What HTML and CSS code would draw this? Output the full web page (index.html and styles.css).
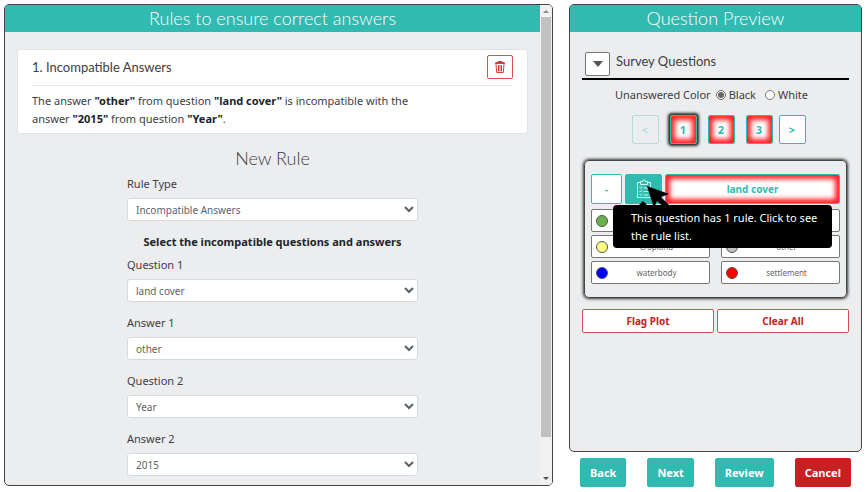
FILE: index.html
```html
<!DOCTYPE html>
<html lang="en">
<head>
<meta charset="utf-8">
<meta name="viewport" content="width=device-width, initial-scale=1">
<title>Survey Rules</title>
<link rel="stylesheet" href="styles.css">
</head>
<body>
<div class="page">
  <main class="panel rules">
    <div class="rules-content">
      <h1 class="panel-title">Rules to ensure correct answers</h1>
      <article class="rule-card">
        <div class="rule-head">
          <h2>1. Incompatible Answers</h2>
          <button class="delete" type="button" aria-label="Delete rule">
            <svg viewBox="0 0 12 14" width="12" height="14" fill="none" stroke="currentColor">
              <path d="M1 3.500h10M1.500 2.500h9M4 2.500V1.500h4v1M2 4l.7 8.500h6.600L10 4M4.500 5v6.500M6 5v6.500M7.500 5v6.500"/>
            </svg>
          </button>
        </div>
        <p>The answer <b>"other"</b> from question <b>"land cover"</b> is incompatible with the answer <b>"2015"</b> from question <b>"Year"</b>.</p>
      </article>
      <form class="rule-form">
        <h2>New Rule</h2>
        <div class="field"><label for="type">Rule Type</label><select id="type"><option>Incompatible Answers</option></select></div>
        <p>Select the incompatible questions and answers</p>
        <div class="field"><label for="q1">Question 1</label><select id="q1"><option>land cover</option></select></div>
        <div class="field"><label for="a1">Answer 1</label><select id="a1"><option>other</option></select></div>
        <div class="field"><label for="q2">Question 2</label><select id="q2"><option>Year</option></select></div>
        <div class="field"><label for="a2">Answer 2</label><select id="a2"><option>2015</option></select></div>
      </form>
    </div>
    <div class="scrollbar" aria-hidden="true">
      <svg viewBox="0 0 10 12" width="10" height="12"><path d="M2 8l3-3 3 3z" fill="#8a8a8a"/></svg>
      <div class="track"><div class="thumb"></div></div>
      <svg viewBox="0 0 10 12" width="10" height="12"><path d="M2 4l3 3 3-3z" fill="#505050"/></svg>
    </div>
  </main>

  <aside class="side">
    <section class="panel preview">
      <h1 class="panel-title">Question Preview</h1>
      <div class="preview-body">
        <div class="survey-head">
          <button class="toggle" type="button" aria-label="Collapse survey questions"><svg viewBox="0 0 12 6" width="12" height="6"><path d="M1 0h10L6 6z" fill="#555"/></svg></button>
          <h2>Survey Questions</h2>
        </div>
        <div class="colors">
          <span>Unanswered Color</span>
          <label><input type="radio" name="color" checked>Black</label>
          <label><input type="radio" name="color">White</label>
        </div>
        <nav class="pager">
          <button type="button" disabled>&lt;</button>
          <button type="button" class="unanswered current">1</button>
          <button type="button" class="unanswered">2</button>
          <button type="button" class="unanswered">3</button>
          <button type="button">&gt;</button>
        </nav>
        <div class="question">
          <div class="question-head">
            <button type="button" class="minus">-</button>
            <div class="rule-anchor">
              <button type="button" class="rule-button" aria-label="Rules" aria-describedby="tip">
                <svg viewBox="0 0 16 20" width="16" height="20" fill="none" stroke="#d9f4f1">
                  <path d="M4.500 3.500h-3v15h13v-15h-3M4.500 5.500v-3h2a1.500 1.500 0 0 1 3 0h2v3zM3.500 8.500l1 1 1.500-2M3.500 12l1 1 1.500-2M3.500 15.500l1 1 1.500-2M7.500 9h5M7.500 12.500h5M7.500 16h5"/>
                </svg>
              </button>
              <svg class="cursor" viewBox="0 0 24 24" width="24" height="24"><path d="M0 0l22 8-8 3 10 10-4 3-10-9-3 7z"/></svg>
              <div class="tooltip" id="tip" role="tooltip">This question has 1 rule. Click to see the rule list.</div>
            </div>
            <button type="button" class="unanswered name">land cover</button>
          </div>
          <div class="answers">
            <button type="button"><i class="dot green"></i><span></span></button>
            <button type="button"><i class="dot brown"></i><span></span></button>
            <button type="button"><i class="dot yellow"></i><span>cropland</span></button>
            <button type="button"><i class="dot gray"></i><span>other</span></button>
            <button type="button"><i class="dot blue"></i><span>waterbody</span></button>
            <button type="button"><i class="dot red"></i><span>settlement</span></button>
          </div>
        </div>
        <div class="plot-actions">
          <button type="button">Flag Plot</button>
          <button type="button">Clear All</button>
        </div>
      </div>
    </section>
    <div class="wizard">
      <button type="button">Back</button>
      <button type="button">Next</button>
      <button type="button">Review</button>
      <button type="button" class="cancel">Cancel</button>
    </div>
  </aside>
</div>
</body>
</html>
```
FILE: styles.css
```css
:root {
  --teal: #31bab0;
  --red: #c62020;
  --ink: #3c4043;
}
* { box-sizing: border-box; }
body {
  margin: 0;
  background: #fff;
  color: var(--ink);
  font: 11px/18px "Noto Sans", "Open Sans", sans-serif;
}
h1, h2, p { margin: 0; }
h1, h2 { font-family: Lato, sans-serif; font-weight: 300; }
button {
  display: flex;
  align-items: center;
  justify-content: center;
  padding: 0;
  border: 1px solid var(--teal);
  border-radius: 2px;
  background: #fff;
  color: var(--teal);
  font: 700 11px/16px "Noto Sans", "Open Sans", sans-serif;
}
.page {
  display: grid;
  grid-template-columns: 549fr 293fr;
  gap: 16px;
  height: 100vh;
  min-height: 492px;
  padding: 4px 4px 5px;
}
.panel {
  border: 1px solid #444;
  border-radius: 5px;
  background: #ecedef;
  overflow: hidden;
}
.panel-title {
  height: 27px;
  background: var(--teal);
  color: #fff;
  font-size: 18px;
  line-height: 27px;
  text-align: center;
}
.rules { display: flex; margin-bottom: 1px; }
.rules-content { flex: 1; min-width: 0; }
.scrollbar {
  display: flex;
  flex-direction: column;
  width: 12px;
  padding: 0 1px;
  background: #f1f1f1;
}
.track { flex: 1; }
.thumb { height: 92%; background: #c1c1c1; }

.rule-card {
  margin: 17px 12px 0;
  padding: 5px 14px;
  border: 1px solid #e2e3e5;
  border-radius: 3px;
  background: #fff;
}
.rule-head {
  display: flex;
  align-items: flex-start;
  justify-content: space-between;
  height: 31px;
  border-bottom: 1px solid #e8e8e8;
}
.rule-head h2 { font-size: 13px; line-height: 24px; font-weight: 400; }
.delete { width: 26px; height: 24px; border-color: #d95050; color: #d04040; }
.rule-card p { max-width: 83%; padding: 6px 0 0; }
b { color: #212529; }
.rule-form { margin: 12px 122px 0; }
.rule-form h2 { font-size: 18px; line-height: 24px; text-align: center; }
.rule-form p {
  margin-bottom: 5px;
  color: #212529;
  font-weight: 700;
  text-align: center;
  white-space: nowrap;
}
.field { display: flex; flex-direction: column; gap: 5px; margin-bottom: 12px; }
.rule-form h2 + .field { margin-top: 5px; }
select {
  width: 100%;
  height: 23px;
  padding: 0 4px;
  border: 1px solid #d5dade;
  border-radius: 3px;
  background: #fff;
  color: #5a6268;
  font: 10px/16px "Noto Sans", "Open Sans", sans-serif;
}

.side { display: flex; flex-direction: column; gap: 6px; min-width: 0; }
.preview { flex: 1; }
.preview-body { padding: 20px 12px; }
.survey-head {
  display: flex;
  gap: 6px;
  padding: 0 3px 2px;
  border-bottom: 2px solid #000;
}
.survey-head h2 { font-size: 13px; line-height: 18px; font-weight: 400; }
.toggle { width: 25px; height: 24px; border-color: #777; }
.colors { display: flex; justify-content: center; gap: 5px; margin-top: 6px; padding-right: 8px; }
.colors label { display: flex; align-items: center; gap: 3px; margin-right: 4px; }
.colors label:last-child { margin-right: 0; }
input { width: 10px; height: 10px; margin: 0; accent-color: #666; }
.pager { display: flex; justify-content: center; gap: 11px; margin-top: 11px; padding-left: 6px; }
.pager button { width: 27px; height: 29px; }
.pager button:last-child { margin-left: -5px; }
.pager button:disabled { background: transparent; opacity: .3; }
.unanswered { box-shadow: inset 0 0 5px 4px #f22; }
.pager .current { box-shadow: inset 0 0 5px 4px #f22, 0 0 3px 2px #222; }
.question {
  margin: 16px 2px 0;
  padding: 13px 6px;
  border: 1px solid #444;
  border-radius: 5px;
  box-shadow: 0 0 3px 1px #333;
}
.question-head { display: flex; gap: 3px; height: 30px; }
.minus { width: 31px; }
.name { flex: 1; font-size: 10px; }
.rule-anchor { position: relative; display: flex; }
.rule-button { width: 37px; background: var(--teal); }
.cursor { position: absolute; z-index: 3; left: 22px; top: 12px; }
.tooltip {
  position: absolute;
  z-index: 2;
  left: -12px;
  top: 31px;
  width: 219px;
  padding: 4px 14px 3px 18px;
  border-radius: 4px;
  background: #000;
  color: #fff;
}
.tooltip::before {
  content: "";
  position: absolute;
  left: 25px;
  top: -4px;
  border: solid transparent;
  border-width: 0 5px 5px;
  border-bottom-color: #000;
}
.answers {
  display: grid;
  grid-template-columns: 1fr 1fr;
  gap: 3px 11px;
  margin-top: 5px;
}
.answers button {
  height: 23px;
  padding: 0 4px;
  border-color: #777;
  color: #666;
  font-weight: 400;
  font-size: 8px;
}
.answers span { flex: 1; text-align: center; }
.dot { width: 12px; height: 12px; border: 1px solid #555; border-radius: 50%; }
.green { background: #6ab04c; }
.brown { background: #a0703c; }
.yellow { background: #ffff80; }
.gray { background: #c0c0c0; }
.blue { background: #00f; }
.red { background: #f00; }
.plot-actions { display: grid; grid-template-columns: 1fr 1fr; gap: 3px; margin-top: 11px; }
.plot-actions button { height: 24px; border-color: #d95050; color: var(--red); font-size: 10px; }
.wizard { display: flex; justify-content: space-between; padding: 0 11px; }
.wizard button { height: 29px; padding: 0 9px; background: var(--teal); color: #fff; }
.wizard .cancel { border-color: var(--red); background: var(--red); }
```
